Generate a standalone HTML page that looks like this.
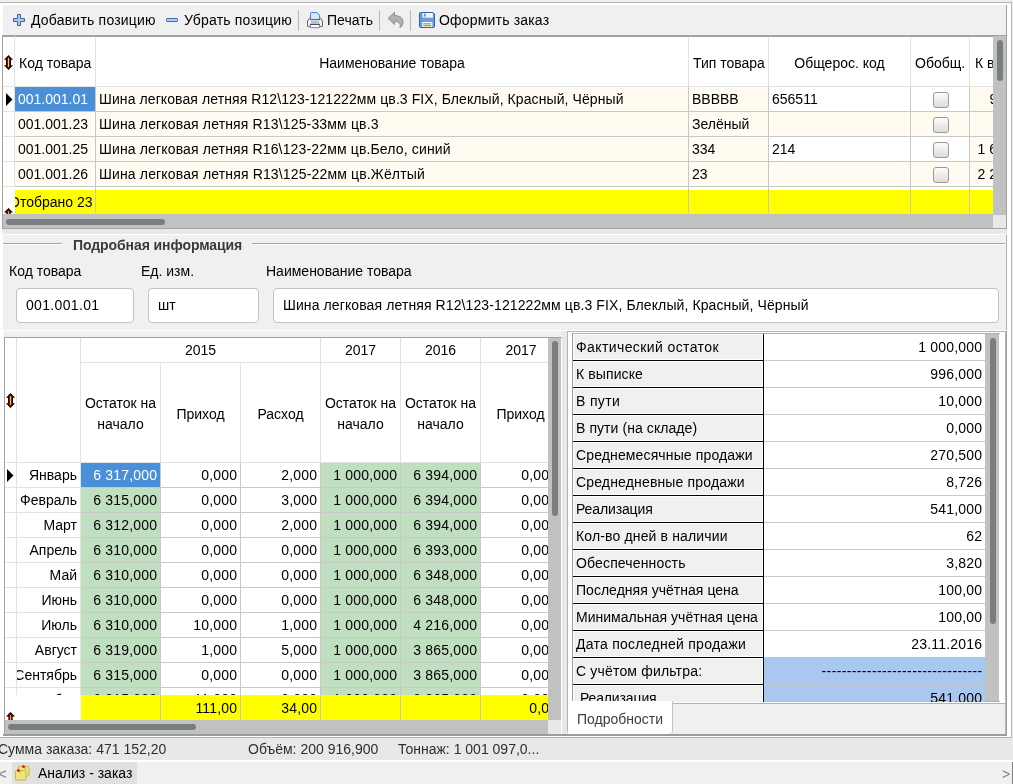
<!DOCTYPE html><html lang="ru"><head><meta charset="utf-8"><title>Анализ - заказ</title><style>
html,body{margin:0;padding:0}
body{width:1013px;height:784px;overflow:hidden;background:#efefef;position:relative;
 font-family:"Liberation Sans","DejaVu Sans",sans-serif;font-size:14px;color:#000}
div{position:absolute;box-sizing:border-box;white-space:nowrap;overflow:hidden}
.t{line-height:16px;height:16px;overflow:visible}
.c{display:flex;align-items:center;padding:0 3px}
.r{justify-content:flex-end;padding-right:2.8px;letter-spacing:.18px}
.m{justify-content:center;text-align:center}
.cb{width:16px;height:16px;border:1px solid #9a9a9a;border-radius:3px;background:linear-gradient(#fdfdfd,#dcdcdc)}
.inp{background:#fff;border:1px solid #c2c2c2;border-radius:4px;display:flex;align-items:center;padding:0 9px 2px 9px}
svg{position:absolute;overflow:visible}
</style></head><body><div id="app" style="left:0;top:0;width:1013px;height:784px;will-change:transform">
<div style="left:0px;top:0px;width:1013px;height:3px;background:#eee"></div>
<div style="left:0px;top:2px;width:1012px;height:736px;background:#fff;border-top:1px solid #b4b4ae;border-right:1px solid #b4b4ae;border-bottom:1px solid #b4b4ae"></div>
<div style="left:3px;top:5px;width:1004px;height:30px;background:#f0f0f0;border-right:1px solid #a0a09a"></div>
<svg style="left:13px;top:14px" width="12" height="12" viewBox="0 0 12 12"><path d="M4.5 .5h3v4h4v3h-4v4h-3v-4h-4v-3h4z" fill="#a9c9f0" stroke="#3c6498" stroke-width="1"/></svg>
<div class="t" style="left:31px;top:12px;width:130px;height:16px;"><span style="letter-spacing:0.204px">Добавить позицию</span></div>
<svg style="left:166px;top:18px" width="12" height="4" viewBox="0 0 12 4"><rect x=".5" y=".5" width="11" height="3" rx=".6" fill="#a9c9f0" stroke="#3f70b4"/></svg>
<div class="t" style="left:184px;top:12px;width:120px;height:16px;"><span style="letter-spacing:0.197px">Убрать позицию</span></div>
<div style="left:298px;top:10px;width:1px;height:21px;background:#b8b8b8"></div>
<svg style="left:306px;top:11px" width="18" height="18" viewBox="0 0 18 18"><path d="M4.5 8.5V2.5Q4.5 1.5 5.5 1.5H11L13.5 4.5V8.5z" fill="#d6e6fb" stroke="#4a8ad4"/><path d="M1.5 15V10L4 6.5H14L16.5 10V15Q16.5 15.6 16 15.6H2Q1.5 15.6 1.5 15z" fill="#ececec" stroke="#5a5a5a" stroke-width=".9"/><path d="M4.5 8.5V2.5Q4.5 1.5 5.5 1.5H11L13.5 4.5V8.5" fill="#d6e6fb" stroke="#4a8ad4"/><path d="M4 8.6H14" stroke="#555" stroke-width="1"/><rect x="5" y="10" width="8" height="2.6" fill="#bdbdbd"/><rect x="4.5" y="13.5" width="9" height="3.2" rx=".6" fill="#fff" stroke="#4a8ad4"/><path d="M4 13.4H14" stroke="#444" stroke-width=".9"/></svg>
<div class="t" style="left:327px;top:12px;width:60px;height:16px;"><span style="letter-spacing:0.051px">Печать</span></div>
<div style="left:379px;top:10px;width:1px;height:21px;background:#b8b8b8"></div>
<svg style="left:386px;top:10px" width="20" height="20" viewBox="386 10 20 20"><path d="M388 18.4 394.5 12.2V15.5C399 15.5 403 17.5 403 22C403 25 401.5 27 399.8 27.6C400.8 25.5 401 21.8 394.5 21.3V24.6z" fill="#b0b0b0" stroke="#8a8a8a" stroke-width=".9" stroke-linejoin="round"/></svg>
<div style="left:410px;top:10px;width:1px;height:21px;background:#b8b8b8"></div>
<svg style="left:419px;top:12px" width="16" height="16" viewBox="0 0 16 16"><path d="M1.5 .5H14L15.5 2V14.5Q15.5 15.5 14.5 15.5H1.5Q.5 15.5 .5 14.5V1.5Q.5 .5 1.5 .5z" fill="#6d9add" stroke="#2f62b0"/><rect x="3.5" y="1" width="10.5" height="4.6" fill="#f2f6fc"/><rect x="5.3" y="1.6" width="1.3" height="3" fill="#3a6cb8"/><rect x="3.3" y="10" width="10" height="5" fill="#fff"/><rect x="4.3" y="11.2" width="8" height="1.2" fill="#6db34a"/><rect x="4.3" y="13" width="8" height="1.2" fill="#6db34a"/></svg>
<div class="t" style="left:439px;top:12px;width:130px;height:16px;"><span style="letter-spacing:0.184px">Оформить заказ</span></div>
<div style="left:2px;top:35px;width:1005px;height:194px;background:#fff;border:1px solid #a4a49e;border-top:2px solid #a4a49e"></div>
<div class="c" style="left:15px;top:37px;width:81px;height:50px;padding:2px 4px 0 4px;border-right:1px solid #e2e2e2;border-bottom:1px solid #e2e2e2;">Код товара</div>
<div class="c m" style="left:96px;top:37px;width:593px;height:50px;padding:2px 4px 0 4px;border-right:1px solid #e2e2e2;border-bottom:1px solid #e2e2e2;">Наименование товара</div>
<div class="c" style="left:689px;top:37px;width:80px;height:50px;padding:2px 4px 0 4px;border-right:1px solid #e2e2e2;border-bottom:1px solid #e2e2e2;">Тип товара</div>
<div class="c m" style="left:769px;top:37px;width:142px;height:50px;padding:2px 4px 0 4px;border-right:1px solid #e2e2e2;border-bottom:1px solid #e2e2e2;">Общерос. код</div>
<div class="c" style="left:911px;top:37px;width:59px;height:50px;padding:2px 4px 0 4px;border-right:1px solid #e2e2e2;border-bottom:1px solid #e2e2e2;">Обобщ.</div>
<div class="c" style="left:970px;top:37px;width:23px;height:50px;padding:2px 4px 0 4px;border-right:1px solid #e2e2e2;border-bottom:1px solid #e2e2e2;border-right:0;padding-left:5px;">К в</div>
<div style="left:3px;top:36px;width:12px;height:51px;border-right:1px solid #e2e2e2;border-bottom:1px solid #e2e2e2"></div>
<svg style="left:4px;top:55px" width="9" height="15" viewBox="0 0 9 15"><path d="M4.5 0 9 4.8H7V10.2H9L4.5 15 0 10.2H2V4.8H0z" fill="#000"/><path d="M4.5 1.6 6.6 4 6 4.6V10.4L6.6 11 4.5 13.4 2.4 11 3 10.4V4.6L2.4 4z" fill="#8a0a00"/><rect x="4" y="3.2" width="1" height="8.6" fill="#ffe400"/></svg>
<div style="left:3px;top:87px;width:12px;height:25px;background:#fff;border-right:1px solid #e2e2e2;border-bottom:1px solid #e2e2e2"></div>
<div class="c" style="left:15px;top:87px;width:81px;height:25px;border-right:1px solid #c8c8c8;border-bottom:1px solid #c8c8c8;background:#4a90d9;color:#fff">001.001.01</div>
<div class="c" style="left:96px;top:87px;width:593px;height:25px;border-right:1px solid #c8c8c8;border-bottom:1px solid #c8c8c8;background:#fffbf0"><span style="letter-spacing:0.089px">Шина легковая летняя R12\123-121222мм цв.3 FIX, Блеклый, Красный, Чёрный</span></div>
<div class="c" style="left:689px;top:87px;width:80px;height:25px;border-right:1px solid #c8c8c8;border-bottom:1px solid #c8c8c8;background:#fffbf0">ВВВВВ</div>
<div class="c" style="left:769px;top:87px;width:142px;height:25px;border-right:1px solid #c8c8c8;border-bottom:1px solid #c8c8c8;background:#fff">656511</div>
<div class="c m" style="left:911px;top:87px;width:59px;height:25px;border-right:1px solid #c8c8c8;border-bottom:1px solid #c8c8c8;background:#fff"><div class="cb" style="position:static;margin:2px 0 0 2px"></div></div>
<div class="c" style="left:970px;top:87px;width:23px;height:25px;border-bottom:1px solid #c8c8c8;background:#fffbf0;padding:0 0 0 19.5px">996,000</div>
<div style="left:3px;top:112px;width:12px;height:25px;background:#fff;border-right:1px solid #e2e2e2;border-bottom:1px solid #e2e2e2"></div>
<div class="c" style="left:15px;top:112px;width:81px;height:25px;border-right:1px solid #c8c8c8;border-bottom:1px solid #c8c8c8;background:#fffbf0">001.001.23</div>
<div class="c" style="left:96px;top:112px;width:593px;height:25px;border-right:1px solid #c8c8c8;border-bottom:1px solid #c8c8c8;background:#fffbf0"><span style="letter-spacing:0.152px">Шина легковая летняя R13\125-33мм цв.3</span></div>
<div class="c" style="left:689px;top:112px;width:80px;height:25px;border-right:1px solid #c8c8c8;border-bottom:1px solid #c8c8c8;background:#fffbf0">Зелёный</div>
<div class="c" style="left:769px;top:112px;width:142px;height:25px;border-right:1px solid #c8c8c8;border-bottom:1px solid #c8c8c8;background:#fffbf0"></div>
<div class="c m" style="left:911px;top:112px;width:59px;height:25px;border-right:1px solid #c8c8c8;border-bottom:1px solid #c8c8c8;background:#fffbf0"><div class="cb" style="position:static;margin:2px 0 0 2px"></div></div>
<div class="c" style="left:970px;top:112px;width:23px;height:25px;border-bottom:1px solid #c8c8c8;background:#fffbf0;padding:0 0 0 7.5px"></div>
<div style="left:3px;top:137px;width:12px;height:25px;background:#fff;border-right:1px solid #e2e2e2;border-bottom:1px solid #e2e2e2"></div>
<div class="c" style="left:15px;top:137px;width:81px;height:25px;border-right:1px solid #c8c8c8;border-bottom:1px solid #c8c8c8;background:#fffbf0">001.001.25</div>
<div class="c" style="left:96px;top:137px;width:593px;height:25px;border-right:1px solid #c8c8c8;border-bottom:1px solid #c8c8c8;background:#fffbf0"><span style="letter-spacing:0.147px">Шина легковая летняя R16\123-22мм цв.Бело, синий</span></div>
<div class="c" style="left:689px;top:137px;width:80px;height:25px;border-right:1px solid #c8c8c8;border-bottom:1px solid #c8c8c8;background:#fffbf0">334</div>
<div class="c" style="left:769px;top:137px;width:142px;height:25px;border-right:1px solid #c8c8c8;border-bottom:1px solid #c8c8c8;background:#fff">214</div>
<div class="c m" style="left:911px;top:137px;width:59px;height:25px;border-right:1px solid #c8c8c8;border-bottom:1px solid #c8c8c8;background:#fff"><div class="cb" style="position:static;margin:2px 0 0 2px"></div></div>
<div class="c" style="left:970px;top:137px;width:23px;height:25px;border-bottom:1px solid #c8c8c8;background:#fffbf0;padding:0 0 0 7.5px">1 600,000</div>
<div style="left:3px;top:162px;width:12px;height:25px;background:#fff;border-right:1px solid #e2e2e2;border-bottom:1px solid #e2e2e2"></div>
<div class="c" style="left:15px;top:162px;width:81px;height:25px;border-right:1px solid #c8c8c8;border-bottom:1px solid #c8c8c8;background:#fffbf0">001.001.26</div>
<div class="c" style="left:96px;top:162px;width:593px;height:25px;border-right:1px solid #c8c8c8;border-bottom:1px solid #c8c8c8;background:#fffbf0"><span style="letter-spacing:0.155px">Шина легковая летняя R13\125-22мм цв.Жёлтый</span></div>
<div class="c" style="left:689px;top:162px;width:80px;height:25px;border-right:1px solid #c8c8c8;border-bottom:1px solid #c8c8c8;background:#fffbf0">23</div>
<div class="c" style="left:769px;top:162px;width:142px;height:25px;border-right:1px solid #c8c8c8;border-bottom:1px solid #c8c8c8;background:#fffbf0"></div>
<div class="c m" style="left:911px;top:162px;width:59px;height:25px;border-right:1px solid #c8c8c8;border-bottom:1px solid #c8c8c8;background:#fffbf0"><div class="cb" style="position:static;margin:2px 0 0 2px"></div></div>
<div class="c" style="left:970px;top:162px;width:23px;height:25px;border-bottom:1px solid #c8c8c8;background:#fffbf0;padding:0 0 0 7.5px">2 200,000</div>
<svg style="left:6px;top:93px" width="7" height="13" viewBox="0 0 7 13"><path d="M0 0 6.5 6.5 0 13z" fill="#000"/></svg>
<div style="left:15px;top:190px;width:978px;height:24px;background:#ff0"></div>
<div style="left:95px;top:187px;width:1px;height:27px;background:#c8c8c8"></div>
<div style="left:688px;top:187px;width:1px;height:27px;background:#c8c8c8"></div>
<div style="left:768px;top:187px;width:1px;height:27px;background:#c8c8c8"></div>
<div style="left:910px;top:187px;width:1px;height:27px;background:#c8c8c8"></div>
<div style="left:969px;top:187px;width:1px;height:27px;background:#c8c8c8"></div>
<div style="left:3px;top:190px;width:12px;height:24px;background:#fff"></div>
<div class="c" style="left:15px;top:190px;width:81px;height:24px;padding:0;margin:0;background:transparent"><span style="margin-left:-6px">Отобрано 23</span></div>
<div style="left:3px;top:190px;width:12px;height:24px;background:#fff"></div>
<svg style="left:4px;top:208px;overflow:hidden" width="9" height="7" viewBox="0 0 9 7"><path d="M4.5 0 9 4.6H6.6V9H2.4V4.6H0z" fill="#000"/><path d="M4.5 2.2V9" stroke="#8a0000" stroke-width="2.6"/><path d="M4.5 3.2V9" stroke="#f0d000" stroke-width=".9"/></svg>
<div style="left:993px;top:36px;width:13px;height:179px;background:#c0c2c1"></div>
<div style="left:997px;top:40px;width:6px;height:41px;background:#7a7e80;border-radius:3px"></div>
<div style="left:3px;top:214px;width:990px;height:14px;background:#c0c2c1"></div>
<div style="left:6px;top:219px;width:159px;height:6px;background:#7a7e80;border-radius:3px"></div>
<div style="left:993px;top:215px;width:13px;height:13px;background:#e8e8e8"></div>
<div style="left:2px;top:229px;width:1005px;height:5px;background:#e8e8e8"></div>
<div style="left:3px;top:234px;width:1004px;height:96px;background:#f0f0f0;border-top:1px solid #fff;border-right:1px solid #b0b0aa"></div>
<div style="left:3px;top:243px;width:59px;height:2px;border-top:1px solid #a6a6a0;border-bottom:1px solid #fff"></div>
<div style="left:252px;top:243px;width:753px;height:2px;border-top:1px solid #a6a6a0;border-bottom:1px solid #fff"></div>
<div class="t" style="left:73px;top:237px;width:180px;height:16px;font-weight:bold;color:#353b3e;letter-spacing:-0.08px">Подробная информация</div>
<div class="t" style="left:9px;top:263px;width:100px;height:16px;">Код товара</div>
<div class="t" style="left:141px;top:263px;width:100px;height:16px;">Ед. изм.</div>
<div class="t" style="left:266px;top:263px;width:200px;height:16px;">Наименование товара</div>
<div class="inp" style="left:16px;top:288px;width:118px;height:35px;"><span style="letter-spacing:0.33px">001.001.01</span></div>
<div class="inp" style="left:148px;top:288px;width:111px;height:35px;">шт</div>
<div class="inp" style="left:273px;top:288px;width:726px;height:35px;"><span style="letter-spacing:0.104px">Шина легковая летняя R12\123-121222мм цв.3 FIX, Блеклый, Красный, Чёрный</span></div>
<div style="left:4px;top:331px;width:1003px;height:405px;background:#f0f0f0"></div>
<div style="left:562px;top:331px;width:5px;height:404px;background:#e8e8e8"></div>
<div style="left:4px;top:337px;width:558px;height:397px;background:#fff;border:1px solid #a4a49e;border-right:0;border-bottom:0"></div>
<div style="left:5px;top:338px;width:12px;height:125px;border-right:1px solid #e2e2e2;border-bottom:1px solid #e2e2e2"></div>
<div style="left:17px;top:338px;width:64px;height:125px;border-right:1px solid #e2e2e2;border-bottom:1px solid #e2e2e2"></div>
<div class="c m" style="left:81px;top:338px;width:240px;height:25px;border-right:1px solid #e2e2e2;border-bottom:1px solid #e2e2e2">2015</div>
<div class="c m" style="left:321px;top:338px;width:80px;height:25px;border-right:1px solid #e2e2e2;border-bottom:1px solid #e2e2e2">2017</div>
<div class="c m" style="left:401px;top:338px;width:80px;height:25px;border-right:1px solid #e2e2e2;border-bottom:1px solid #e2e2e2">2016</div>
<div class="c m" style="left:481px;top:338px;width:80px;height:25px;border-bottom:1px solid #e2e2e2">2017</div>
<div class="c m" style="left:81px;top:363px;width:80px;height:100px;border-right:1px solid #e2e2e2;border-bottom:1px solid #e2e2e2;white-space:normal;line-height:21px;padding:3px 0 0 0"><span>Остаток на<br>начало</span></div>
<div class="c m" style="left:161px;top:363px;width:80px;height:100px;border-right:1px solid #e2e2e2;border-bottom:1px solid #e2e2e2;white-space:normal;line-height:21px;padding:3px 0 0 0"><span>Приход</span></div>
<div class="c m" style="left:241px;top:363px;width:80px;height:100px;border-right:1px solid #e2e2e2;border-bottom:1px solid #e2e2e2;white-space:normal;line-height:21px;padding:3px 0 0 0"><span>Расход</span></div>
<div class="c m" style="left:321px;top:363px;width:80px;height:100px;border-right:1px solid #e2e2e2;border-bottom:1px solid #e2e2e2;white-space:normal;line-height:21px;padding:3px 0 0 0"><span>Остаток на<br>начало</span></div>
<div class="c m" style="left:401px;top:363px;width:80px;height:100px;border-right:1px solid #e2e2e2;border-bottom:1px solid #e2e2e2;white-space:normal;line-height:21px;padding:3px 0 0 0"><span>Остаток на<br>начало</span></div>
<div class="c m" style="left:481px;top:363px;width:80px;height:100px;border-right:1px solid #e2e2e2;border-bottom:1px solid #e2e2e2;white-space:normal;line-height:21px;padding:3px 0 0 0"><span>Приход</span></div>
<svg style="left:6px;top:393px" width="9" height="15" viewBox="0 0 9 15"><path d="M4.5 0 9 4.8H7V10.2H9L4.5 15 0 10.2H2V4.8H0z" fill="#000"/><path d="M4.5 1.6 6.6 4 6 4.6V10.4L6.6 11 4.5 13.4 2.4 11 3 10.4V4.6L2.4 4z" fill="#8a0a00"/><rect x="4" y="3.2" width="1" height="8.6" fill="#ffe400"/></svg>
<div style="left:5px;top:463px;width:12px;height:25px;border-right:1px solid #e2e2e2;border-bottom:1px solid #e2e2e2"></div>
<div class="c" style="left:17px;top:463px;width:64px;height:25px;border-right:1px solid #e2e2e2;border-bottom:1px solid #e2e2e2;direction:rtl;padding-right:3px;padding-left:0"><span style="direction:ltr;unicode-bidi:embed">Январь</span></div>
<div class="c r" style="left:81px;top:463px;width:80px;height:25px;border-right:1px solid #c8c8c8;border-bottom:1px solid #c8c8c8;background:#4a90d9;color:#fff">6 317,000</div>
<div class="c r" style="left:161px;top:463px;width:80px;height:25px;border-right:1px solid #c8c8c8;border-bottom:1px solid #c8c8c8;background:#fff;color:#000">0,000</div>
<div class="c r" style="left:241px;top:463px;width:80px;height:25px;border-right:1px solid #c8c8c8;border-bottom:1px solid #c8c8c8;background:#fff;color:#000">2,000</div>
<div class="c r" style="left:321px;top:463px;width:80px;height:25px;border-right:1px solid #c8c8c8;border-bottom:1px solid #c8c8c8;background:#c0dfc0;color:#000">1 000,000</div>
<div class="c r" style="left:401px;top:463px;width:80px;height:25px;border-right:1px solid #c8c8c8;border-bottom:1px solid #c8c8c8;background:#c0dfc0;color:#000">6 394,000</div>
<div class="c r" style="left:481px;top:463px;width:80px;height:25px;border-right:1px solid #c8c8c8;border-bottom:1px solid #c8c8c8;background:#fff;color:#000">0,000</div>
<div style="left:5px;top:488px;width:12px;height:25px;border-right:1px solid #e2e2e2;border-bottom:1px solid #e2e2e2"></div>
<div class="c" style="left:17px;top:488px;width:64px;height:25px;border-right:1px solid #e2e2e2;border-bottom:1px solid #e2e2e2;direction:rtl;padding-right:3px;padding-left:0"><span style="direction:ltr;unicode-bidi:embed">Февраль</span></div>
<div class="c r" style="left:81px;top:488px;width:80px;height:25px;border-right:1px solid #c8c8c8;border-bottom:1px solid #c8c8c8;background:#c0dfc0;color:#000">6 315,000</div>
<div class="c r" style="left:161px;top:488px;width:80px;height:25px;border-right:1px solid #c8c8c8;border-bottom:1px solid #c8c8c8;background:#fff;color:#000">0,000</div>
<div class="c r" style="left:241px;top:488px;width:80px;height:25px;border-right:1px solid #c8c8c8;border-bottom:1px solid #c8c8c8;background:#fff;color:#000">3,000</div>
<div class="c r" style="left:321px;top:488px;width:80px;height:25px;border-right:1px solid #c8c8c8;border-bottom:1px solid #c8c8c8;background:#c0dfc0;color:#000">1 000,000</div>
<div class="c r" style="left:401px;top:488px;width:80px;height:25px;border-right:1px solid #c8c8c8;border-bottom:1px solid #c8c8c8;background:#c0dfc0;color:#000">6 394,000</div>
<div class="c r" style="left:481px;top:488px;width:80px;height:25px;border-right:1px solid #c8c8c8;border-bottom:1px solid #c8c8c8;background:#fff;color:#000">0,000</div>
<div style="left:5px;top:513px;width:12px;height:25px;border-right:1px solid #e2e2e2;border-bottom:1px solid #e2e2e2"></div>
<div class="c" style="left:17px;top:513px;width:64px;height:25px;border-right:1px solid #e2e2e2;border-bottom:1px solid #e2e2e2;direction:rtl;padding-right:3px;padding-left:0"><span style="direction:ltr;unicode-bidi:embed">Март</span></div>
<div class="c r" style="left:81px;top:513px;width:80px;height:25px;border-right:1px solid #c8c8c8;border-bottom:1px solid #c8c8c8;background:#c0dfc0;color:#000">6 312,000</div>
<div class="c r" style="left:161px;top:513px;width:80px;height:25px;border-right:1px solid #c8c8c8;border-bottom:1px solid #c8c8c8;background:#fff;color:#000">0,000</div>
<div class="c r" style="left:241px;top:513px;width:80px;height:25px;border-right:1px solid #c8c8c8;border-bottom:1px solid #c8c8c8;background:#fff;color:#000">2,000</div>
<div class="c r" style="left:321px;top:513px;width:80px;height:25px;border-right:1px solid #c8c8c8;border-bottom:1px solid #c8c8c8;background:#c0dfc0;color:#000">1 000,000</div>
<div class="c r" style="left:401px;top:513px;width:80px;height:25px;border-right:1px solid #c8c8c8;border-bottom:1px solid #c8c8c8;background:#c0dfc0;color:#000">6 394,000</div>
<div class="c r" style="left:481px;top:513px;width:80px;height:25px;border-right:1px solid #c8c8c8;border-bottom:1px solid #c8c8c8;background:#fff;color:#000">0,000</div>
<div style="left:5px;top:538px;width:12px;height:25px;border-right:1px solid #e2e2e2;border-bottom:1px solid #e2e2e2"></div>
<div class="c" style="left:17px;top:538px;width:64px;height:25px;border-right:1px solid #e2e2e2;border-bottom:1px solid #e2e2e2;direction:rtl;padding-right:3px;padding-left:0"><span style="direction:ltr;unicode-bidi:embed">Апрель</span></div>
<div class="c r" style="left:81px;top:538px;width:80px;height:25px;border-right:1px solid #c8c8c8;border-bottom:1px solid #c8c8c8;background:#c0dfc0;color:#000">6 310,000</div>
<div class="c r" style="left:161px;top:538px;width:80px;height:25px;border-right:1px solid #c8c8c8;border-bottom:1px solid #c8c8c8;background:#fff;color:#000">0,000</div>
<div class="c r" style="left:241px;top:538px;width:80px;height:25px;border-right:1px solid #c8c8c8;border-bottom:1px solid #c8c8c8;background:#fff;color:#000">0,000</div>
<div class="c r" style="left:321px;top:538px;width:80px;height:25px;border-right:1px solid #c8c8c8;border-bottom:1px solid #c8c8c8;background:#c0dfc0;color:#000">1 000,000</div>
<div class="c r" style="left:401px;top:538px;width:80px;height:25px;border-right:1px solid #c8c8c8;border-bottom:1px solid #c8c8c8;background:#c0dfc0;color:#000">6 393,000</div>
<div class="c r" style="left:481px;top:538px;width:80px;height:25px;border-right:1px solid #c8c8c8;border-bottom:1px solid #c8c8c8;background:#fff;color:#000">0,000</div>
<div style="left:5px;top:563px;width:12px;height:25px;border-right:1px solid #e2e2e2;border-bottom:1px solid #e2e2e2"></div>
<div class="c" style="left:17px;top:563px;width:64px;height:25px;border-right:1px solid #e2e2e2;border-bottom:1px solid #e2e2e2;direction:rtl;padding-right:3px;padding-left:0"><span style="direction:ltr;unicode-bidi:embed">Май</span></div>
<div class="c r" style="left:81px;top:563px;width:80px;height:25px;border-right:1px solid #c8c8c8;border-bottom:1px solid #c8c8c8;background:#c0dfc0;color:#000">6 310,000</div>
<div class="c r" style="left:161px;top:563px;width:80px;height:25px;border-right:1px solid #c8c8c8;border-bottom:1px solid #c8c8c8;background:#fff;color:#000">0,000</div>
<div class="c r" style="left:241px;top:563px;width:80px;height:25px;border-right:1px solid #c8c8c8;border-bottom:1px solid #c8c8c8;background:#fff;color:#000">0,000</div>
<div class="c r" style="left:321px;top:563px;width:80px;height:25px;border-right:1px solid #c8c8c8;border-bottom:1px solid #c8c8c8;background:#c0dfc0;color:#000">1 000,000</div>
<div class="c r" style="left:401px;top:563px;width:80px;height:25px;border-right:1px solid #c8c8c8;border-bottom:1px solid #c8c8c8;background:#c0dfc0;color:#000">6 348,000</div>
<div class="c r" style="left:481px;top:563px;width:80px;height:25px;border-right:1px solid #c8c8c8;border-bottom:1px solid #c8c8c8;background:#fff;color:#000">0,000</div>
<div style="left:5px;top:588px;width:12px;height:25px;border-right:1px solid #e2e2e2;border-bottom:1px solid #e2e2e2"></div>
<div class="c" style="left:17px;top:588px;width:64px;height:25px;border-right:1px solid #e2e2e2;border-bottom:1px solid #e2e2e2;direction:rtl;padding-right:3px;padding-left:0"><span style="direction:ltr;unicode-bidi:embed">Июнь</span></div>
<div class="c r" style="left:81px;top:588px;width:80px;height:25px;border-right:1px solid #c8c8c8;border-bottom:1px solid #c8c8c8;background:#c0dfc0;color:#000">6 310,000</div>
<div class="c r" style="left:161px;top:588px;width:80px;height:25px;border-right:1px solid #c8c8c8;border-bottom:1px solid #c8c8c8;background:#fff;color:#000">0,000</div>
<div class="c r" style="left:241px;top:588px;width:80px;height:25px;border-right:1px solid #c8c8c8;border-bottom:1px solid #c8c8c8;background:#fff;color:#000">0,000</div>
<div class="c r" style="left:321px;top:588px;width:80px;height:25px;border-right:1px solid #c8c8c8;border-bottom:1px solid #c8c8c8;background:#c0dfc0;color:#000">1 000,000</div>
<div class="c r" style="left:401px;top:588px;width:80px;height:25px;border-right:1px solid #c8c8c8;border-bottom:1px solid #c8c8c8;background:#c0dfc0;color:#000">6 348,000</div>
<div class="c r" style="left:481px;top:588px;width:80px;height:25px;border-right:1px solid #c8c8c8;border-bottom:1px solid #c8c8c8;background:#fff;color:#000">0,000</div>
<div style="left:5px;top:613px;width:12px;height:25px;border-right:1px solid #e2e2e2;border-bottom:1px solid #e2e2e2"></div>
<div class="c" style="left:17px;top:613px;width:64px;height:25px;border-right:1px solid #e2e2e2;border-bottom:1px solid #e2e2e2;direction:rtl;padding-right:3px;padding-left:0"><span style="direction:ltr;unicode-bidi:embed">Июль</span></div>
<div class="c r" style="left:81px;top:613px;width:80px;height:25px;border-right:1px solid #c8c8c8;border-bottom:1px solid #c8c8c8;background:#c0dfc0;color:#000">6 310,000</div>
<div class="c r" style="left:161px;top:613px;width:80px;height:25px;border-right:1px solid #c8c8c8;border-bottom:1px solid #c8c8c8;background:#fff;color:#000">10,000</div>
<div class="c r" style="left:241px;top:613px;width:80px;height:25px;border-right:1px solid #c8c8c8;border-bottom:1px solid #c8c8c8;background:#fff;color:#000">1,000</div>
<div class="c r" style="left:321px;top:613px;width:80px;height:25px;border-right:1px solid #c8c8c8;border-bottom:1px solid #c8c8c8;background:#c0dfc0;color:#000">1 000,000</div>
<div class="c r" style="left:401px;top:613px;width:80px;height:25px;border-right:1px solid #c8c8c8;border-bottom:1px solid #c8c8c8;background:#c0dfc0;color:#000">4 216,000</div>
<div class="c r" style="left:481px;top:613px;width:80px;height:25px;border-right:1px solid #c8c8c8;border-bottom:1px solid #c8c8c8;background:#fff;color:#000">0,000</div>
<div style="left:5px;top:638px;width:12px;height:25px;border-right:1px solid #e2e2e2;border-bottom:1px solid #e2e2e2"></div>
<div class="c" style="left:17px;top:638px;width:64px;height:25px;border-right:1px solid #e2e2e2;border-bottom:1px solid #e2e2e2;direction:rtl;padding-right:3px;padding-left:0"><span style="direction:ltr;unicode-bidi:embed">Август</span></div>
<div class="c r" style="left:81px;top:638px;width:80px;height:25px;border-right:1px solid #c8c8c8;border-bottom:1px solid #c8c8c8;background:#c0dfc0;color:#000">6 319,000</div>
<div class="c r" style="left:161px;top:638px;width:80px;height:25px;border-right:1px solid #c8c8c8;border-bottom:1px solid #c8c8c8;background:#fff;color:#000">1,000</div>
<div class="c r" style="left:241px;top:638px;width:80px;height:25px;border-right:1px solid #c8c8c8;border-bottom:1px solid #c8c8c8;background:#fff;color:#000">5,000</div>
<div class="c r" style="left:321px;top:638px;width:80px;height:25px;border-right:1px solid #c8c8c8;border-bottom:1px solid #c8c8c8;background:#c0dfc0;color:#000">1 000,000</div>
<div class="c r" style="left:401px;top:638px;width:80px;height:25px;border-right:1px solid #c8c8c8;border-bottom:1px solid #c8c8c8;background:#c0dfc0;color:#000">3 865,000</div>
<div class="c r" style="left:481px;top:638px;width:80px;height:25px;border-right:1px solid #c8c8c8;border-bottom:1px solid #c8c8c8;background:#fff;color:#000">0,000</div>
<div style="left:5px;top:663px;width:12px;height:25px;border-right:1px solid #e2e2e2;border-bottom:1px solid #e2e2e2"></div>
<div class="c" style="left:17px;top:663px;width:64px;height:25px;border-right:1px solid #e2e2e2;border-bottom:1px solid #e2e2e2;direction:rtl;padding-right:3px;padding-left:0"><span style="direction:ltr;unicode-bidi:embed">Сентябрь</span></div>
<div class="c r" style="left:81px;top:663px;width:80px;height:25px;border-right:1px solid #c8c8c8;border-bottom:1px solid #c8c8c8;background:#c0dfc0;color:#000">6 315,000</div>
<div class="c r" style="left:161px;top:663px;width:80px;height:25px;border-right:1px solid #c8c8c8;border-bottom:1px solid #c8c8c8;background:#fff;color:#000">0,000</div>
<div class="c r" style="left:241px;top:663px;width:80px;height:25px;border-right:1px solid #c8c8c8;border-bottom:1px solid #c8c8c8;background:#fff;color:#000">0,000</div>
<div class="c r" style="left:321px;top:663px;width:80px;height:25px;border-right:1px solid #c8c8c8;border-bottom:1px solid #c8c8c8;background:#c0dfc0;color:#000">1 000,000</div>
<div class="c r" style="left:401px;top:663px;width:80px;height:25px;border-right:1px solid #c8c8c8;border-bottom:1px solid #c8c8c8;background:#c0dfc0;color:#000">3 865,000</div>
<div class="c r" style="left:481px;top:663px;width:80px;height:25px;border-right:1px solid #c8c8c8;border-bottom:1px solid #c8c8c8;background:#fff;color:#000">0,000</div>
<div style="left:5px;top:688px;width:12px;height:25px;border-right:1px solid #e2e2e2;border-bottom:1px solid #e2e2e2"></div>
<div class="c" style="left:17px;top:688px;width:64px;height:25px;border-right:1px solid #e2e2e2;border-bottom:1px solid #e2e2e2;direction:rtl;padding-right:3px;padding-left:0"><span style="direction:ltr;unicode-bidi:embed">Октябрь</span></div>
<div class="c r" style="left:81px;top:688px;width:80px;height:25px;border-right:1px solid #c8c8c8;border-bottom:1px solid #c8c8c8;background:#c0dfc0;color:#000;padding-bottom:3px">6 315,000</div>
<div class="c r" style="left:161px;top:688px;width:80px;height:25px;border-right:1px solid #c8c8c8;border-bottom:1px solid #c8c8c8;background:#fff;color:#000;padding-bottom:3px">11,000</div>
<div class="c r" style="left:241px;top:688px;width:80px;height:25px;border-right:1px solid #c8c8c8;border-bottom:1px solid #c8c8c8;background:#fff;color:#000;padding-bottom:3px">0,000</div>
<div class="c r" style="left:321px;top:688px;width:80px;height:25px;border-right:1px solid #c8c8c8;border-bottom:1px solid #c8c8c8;background:#c0dfc0;color:#000;padding-bottom:3px">1 000,000</div>
<div class="c r" style="left:401px;top:688px;width:80px;height:25px;border-right:1px solid #c8c8c8;border-bottom:1px solid #c8c8c8;background:#c0dfc0;color:#000;padding-bottom:3px">3 865,000</div>
<div class="c r" style="left:481px;top:688px;width:80px;height:25px;border-right:1px solid #c8c8c8;border-bottom:1px solid #c8c8c8;background:#fff;color:#000;padding-bottom:3px">0,000</div>
<svg style="left:7px;top:468.5px" width="7" height="13" viewBox="0 0 7 13"><path d="M0 0 6.5 6.5 0 13z" fill="#000"/></svg>
<div style="left:5px;top:695px;width:76px;height:25px;background:#fff"></div>
<div class="c r" style="left:81px;top:695px;width:80px;height:25px;background:#ff0;border-right:1px solid #c8c8c8"></div>
<div class="c r" style="left:161px;top:695px;width:80px;height:25px;background:#ff0;border-right:1px solid #c8c8c8">111,00</div>
<div class="c r" style="left:241px;top:695px;width:80px;height:25px;background:#ff0;border-right:1px solid #c8c8c8">34,00</div>
<div class="c r" style="left:321px;top:695px;width:80px;height:25px;background:#ff0;border-right:1px solid #c8c8c8"></div>
<div class="c r" style="left:401px;top:695px;width:80px;height:25px;background:#ff0;border-right:1px solid #c8c8c8"></div>
<div class="c r" style="left:481px;top:695px;width:80px;height:25px;background:#ff0;border-right:1px solid #c8c8c8">0,00</div>
<svg style="left:6px;top:712px;overflow:hidden" width="9" height="8" viewBox="0 0 9 8"><path d="M4.5 0 9 4.6H6.6V9H2.4V4.6H0z" fill="#000"/><path d="M4.5 2.2V9" stroke="#8a0000" stroke-width="2.6"/><path d="M4.5 3.2V9" stroke="#f0d000" stroke-width=".9"/></svg>
<div style="left:548px;top:338px;width:13px;height:382px;background:#c0c2c1"></div>
<div style="left:552px;top:341px;width:6px;height:175px;background:#7a7e80;border-radius:3px"></div>
<div style="left:5px;top:720px;width:543px;height:14px;background:#c0c2c1"></div>
<div style="left:8px;top:724px;width:188px;height:6px;background:#7a7e80;border-radius:3px"></div>
<div style="left:548px;top:720px;width:13px;height:14px;background:#e8e8e8"></div>
<div style="left:567px;top:331px;width:439px;height:403px;background:#fff;border:1px solid #b4b4ae;border-bottom:0;border-radius:0 0 0 4px"></div>
<div style="left:1006px;top:331px;width:1px;height:405px;background:#a0a09a"></div>
<div style="left:3px;top:734px;width:1004px;height:2px;background:#9c9c96"></div>
<div style="left:572px;top:333px;width:428px;height:369px;background:#fff;border-left:1px solid #9a9a9a;border-top:1px solid #b0b0b0;border-bottom:1px solid #b0b0b0"></div>
<div class="c" style="left:573px;top:334px;width:191px;height:27px;background:#f0f0f0;border-right:1px solid #000;border-bottom:1px solid #000;box-shadow:inset 0 0 0 1px #fff;padding:0 3px"><span style="letter-spacing:0.398px">Фактический остаток</span></div>
<div class="c r" style="left:764px;top:334px;width:221px;height:27px;background:#fff;border-bottom:1px solid #c8c8c8">1 000,000</div>
<div class="c" style="left:573px;top:361px;width:191px;height:27px;background:#f0f0f0;border-right:1px solid #000;border-bottom:1px solid #000;box-shadow:inset 0 0 0 1px #fff;padding:0 3px"><span style="letter-spacing:0.111px">К выписке</span></div>
<div class="c r" style="left:764px;top:361px;width:221px;height:27px;background:#fff;border-bottom:1px solid #c8c8c8">996,000</div>
<div class="c" style="left:573px;top:388px;width:191px;height:27px;background:#f0f0f0;border-right:1px solid #000;border-bottom:1px solid #000;box-shadow:inset 0 0 0 1px #fff;padding:0 3px"><span style="letter-spacing:0.331px">В пути</span></div>
<div class="c r" style="left:764px;top:388px;width:221px;height:27px;background:#fff;border-bottom:1px solid #c8c8c8">10,000</div>
<div class="c" style="left:573px;top:415px;width:191px;height:27px;background:#f0f0f0;border-right:1px solid #000;border-bottom:1px solid #000;box-shadow:inset 0 0 0 1px #fff;padding:0 3px"><span style="letter-spacing:0.074px">В пути (на складе)</span></div>
<div class="c r" style="left:764px;top:415px;width:221px;height:27px;background:#fff;border-bottom:1px solid #c8c8c8">0,000</div>
<div class="c" style="left:573px;top:442px;width:191px;height:27px;background:#f0f0f0;border-right:1px solid #000;border-bottom:1px solid #000;box-shadow:inset 0 0 0 1px #fff;padding:0 3px"><span style="letter-spacing:0.13px">Среднемесячные продажи</span></div>
<div class="c r" style="left:764px;top:442px;width:221px;height:27px;background:#fff;border-bottom:1px solid #c8c8c8">270,500</div>
<div class="c" style="left:573px;top:469px;width:191px;height:27px;background:#f0f0f0;border-right:1px solid #000;border-bottom:1px solid #000;box-shadow:inset 0 0 0 1px #fff;padding:0 3px"><span style="letter-spacing:0.16px">Среднедневные продажи</span></div>
<div class="c r" style="left:764px;top:469px;width:221px;height:27px;background:#fff;border-bottom:1px solid #c8c8c8">8,726</div>
<div class="c" style="left:573px;top:496px;width:191px;height:27px;background:#f0f0f0;border-right:1px solid #000;border-bottom:1px solid #000;box-shadow:inset 0 0 0 1px #fff;padding:0 3px"><span style="letter-spacing:-0.125px">Реализация</span></div>
<div class="c r" style="left:764px;top:496px;width:221px;height:27px;background:#fff;border-bottom:1px solid #c8c8c8">541,000</div>
<div class="c" style="left:573px;top:523px;width:191px;height:27px;background:#f0f0f0;border-right:1px solid #000;border-bottom:1px solid #000;box-shadow:inset 0 0 0 1px #fff;padding:0 3px"><span style="letter-spacing:0.145px">Кол-во дней в наличии</span></div>
<div class="c r" style="left:764px;top:523px;width:221px;height:27px;background:#fff;border-bottom:1px solid #c8c8c8">62</div>
<div class="c" style="left:573px;top:550px;width:191px;height:27px;background:#f0f0f0;border-right:1px solid #000;border-bottom:1px solid #000;box-shadow:inset 0 0 0 1px #fff;padding:0 3px"><span style="letter-spacing:0.15px">Обеспеченность</span></div>
<div class="c r" style="left:764px;top:550px;width:221px;height:27px;background:#fff;border-bottom:1px solid #c8c8c8">3,820</div>
<div class="c" style="left:573px;top:577px;width:191px;height:27px;background:#f0f0f0;border-right:1px solid #000;border-bottom:1px solid #000;box-shadow:inset 0 0 0 1px #fff;padding:0 3px"><span style="letter-spacing:0.026px">Последняя учётная цена</span></div>
<div class="c r" style="left:764px;top:577px;width:221px;height:27px;background:#fff;border-bottom:1px solid #c8c8c8">100,00</div>
<div class="c" style="left:573px;top:604px;width:191px;height:27px;background:#f0f0f0;border-right:1px solid #000;border-bottom:1px solid #000;box-shadow:inset 0 0 0 1px #fff;padding:0 3px"><span style="letter-spacing:0.016px">Минимальная учётная цена</span></div>
<div class="c r" style="left:764px;top:604px;width:221px;height:27px;background:#fff;border-bottom:1px solid #c8c8c8">100,00</div>
<div class="c" style="left:573px;top:631px;width:191px;height:27px;background:#f0f0f0;border-right:1px solid #000;border-bottom:1px solid #000;box-shadow:inset 0 0 0 1px #fff;padding:0 3px"><span style="letter-spacing:0.264px">Дата последней продажи</span></div>
<div class="c r" style="left:764px;top:631px;width:221px;height:27px;background:#fff;border-bottom:1px solid #c8c8c8">23.11.2016</div>
<div class="c" style="left:573px;top:658px;width:191px;height:27px;background:#f0f0f0;border-right:1px solid #000;border-bottom:1px solid #000;box-shadow:inset 0 0 0 1px #fff;padding:0 3px"><span style="letter-spacing:0.175px">С учётом фильтра:</span></div>
<div class="c r" style="left:764px;top:658px;width:221px;height:27px;background:#a8c8f0;border-bottom:1px solid #c8c8c8"><span style="letter-spacing:0.37px;margin-right:-0.4px">--------------------------------</span></div>
<div class="c" style="left:573px;top:685px;width:191px;height:27px;background:#f0f0f0;border-right:1px solid #000;border-bottom:1px solid #000;box-shadow:inset 0 0 0 1px #fff;padding:0 3px">&nbsp;<span style="letter-spacing:-0.125px">Реализация</span></div>
<div class="c r" style="left:764px;top:685px;width:221px;height:27px;background:#a8c8f0;border-bottom:1px solid #c8c8c8">541,000</div>
<div style="left:985px;top:334px;width:14px;height:367px;background:#c0c2c1"></div>
<div style="left:990px;top:338px;width:6px;height:286px;background:#7a7e80;border-radius:3px"></div>
<div style="left:568px;top:702px;width:437px;height:32px;background:#fff"></div>
<div style="left:672px;top:703px;width:333px;height:31px;background:#f0f0f0;border-top:1px solid #b4b4ae"></div>
<div class="c" style="left:568px;top:701px;width:105px;height:33px;background:#fff;border:1px solid #c4c4c0;border-top:0;border-left:0;border-bottom:0;border-radius:0 0 4px 0;color:#3a4044;padding:3px 0 0 9px">Подробности</div>
<div style="left:0px;top:738px;width:1013px;height:22px;background:#e8e8e8"></div>
<div class="t" style="left:-2px;top:741px;width:300px;height:16px;color:#2e2e2e">Сумма заказа: 471 152,20</div>
<div class="t" style="left:248px;top:741px;width:150px;height:16px;color:#2e2e2e">Объём: 200 916,900</div>
<div class="t" style="left:398px;top:741px;width:160px;height:16px;color:#2e2e2e">Тоннаж: 1 001 097,0...</div>
<div style="left:0px;top:760px;width:1013px;height:2px;background:#fff"></div>
<div style="left:0px;top:762px;width:1013px;height:22px;background:#f0f0f0"></div>
<div style="left:12px;top:762px;width:125px;height:22px;background:#e0e0e0"></div>
<div class="t" style="left:-1.5px;top:766px;width:10px;height:16px;color:#808080">&lt;</div>
<div class="t" style="left:1002px;top:766px;width:10px;height:16px;color:#808080">&gt;</div>
<div style="left:1012px;top:762px;width:1px;height:22px;background:#808080"></div>
<svg style="left:15px;top:764px" width="15" height="17" viewBox="15 764 15 17"><rect x="18.5" y="766.5" width="10.5" height="9.5" rx="1" fill="#efe27a" stroke="#c9b23e"/><rect x="15.5" y="770.5" width="10.5" height="9.5" rx="1" fill="#f0e47c" stroke="#c9b23e"/><path d="M23.8 767 25.8 768.8M18.8 771 20.8 772.8" stroke="#777" stroke-width=".8"/><circle cx="23.5" cy="766.6" r="1.5" fill="#e8202a"/><circle cx="18.4" cy="770.4" r="1.5" fill="#e8202a"/></svg>
<div class="t" style="left:38px;top:765px;width:110px;height:16px;">Анализ - заказ</div>
</div></body></html>
